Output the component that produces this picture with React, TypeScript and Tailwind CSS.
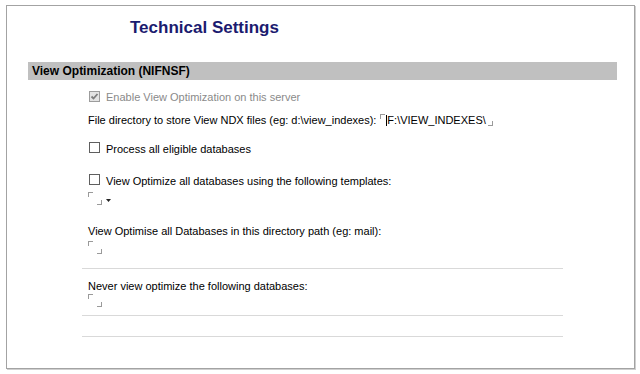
import type { ReactNode } from 'react';

// Lotus Notes field delimiters: top-left and bottom-right corner marks
const OpenMark = () => (
  <span className="inline-block w-[5px] h-[5px] border-l border-t border-[#9a9a9a] self-start mt-[1px]" />
);
const CloseMark = () => (
  <span className="inline-block w-[5px] h-[5px] border-r border-b border-[#9a9a9a] self-end mb-[1px]" />
);

const CheckBox = ({ checked, disabled }: { checked?: boolean; disabled?: boolean }) => (
  <span
    className={`inline-flex items-center justify-center w-[11px] h-[11px] border ${
      disabled ? 'border-[#9c9c9c] bg-[#e3e3e3]' : 'border-[#5f5f5f] bg-white'
    }`}
  >
    {checked && (
      <svg width="9" height="9" viewBox="0 0 9 9">
        <path d="M1.5 4.5 L3.5 6.5 L7.5 2" fill="none" stroke="#7d7d7d" strokeWidth="1.8" />
      </svg>
    )}
  </span>
);

const Row = ({ className, children }: { className: string; children: ReactNode }) => (
  <div className={`flex items-center h-[14px] ml-[81px] ${className}`}>{children}</div>
);

const EmptyField = ({ className, dropdown }: { className: string; dropdown?: boolean }) => (
  <div className={`flex h-[15px] ml-[81px] ${className}`}>
    <OpenMark />
    <span className="w-[4px]" />
    <CloseMark />
    {dropdown && (
      <svg width="5" height="3" viewBox="0 0 5 3" className="self-end mb-[4px] ml-[4px]">
        <path d="M0 0 H5 L2.5 3 Z" fill="#222" />
      </svg>
    )}
  </div>
);

export default function App() {
  return (
    <div className="w-[640px] h-[374px] bg-white pt-[5px] pl-[6px]" style={{ fontFamily: '"Liberation Sans", Arial, sans-serif' }}>
      <div className="w-[629px] h-[364px] border border-[#a3a3a3] shadow-[1px_1px_0_#cfcfcf] flex flex-col">
        <h1 className="mt-[12px] pl-[123px] text-[17px] leading-[20px] font-bold text-[#1b1b6f]">Technical Settings</h1>

        <div className="mt-[24px] ml-[21px] w-[589px] h-[18px] bg-[#c0c0c0] flex items-center pl-[4px]">
          <span className="text-[12px] font-bold text-black">View Optimization (NIFNSF)</span>
        </div>

        <div className="text-[11px] text-black">
          <Row className="mt-[10px]">
            <span className="ml-[1px]"><CheckBox checked disabled /></span>
            <span className="ml-[6px] text-[#8a8a8a]">Enable View Optimization on this server</span>
          </Row>

          <Row className="mt-[9px]">
            <span>File directory to store View NDX files (eg: d:\view_indexes):</span>
            <span className="flex h-[14px] ml-[4px]">
              <OpenMark />
              <span className="w-px h-[11px] bg-black self-center ml-[1px]" />
              <span className="leading-[14px]">F:\VIEW_INDEXES\</span>
              <span className="w-[2px]" />
              <CloseMark />
            </span>
          </Row>

          <Row className="mt-[15px]">
            <span className="ml-[1px]"><CheckBox /></span>
            <span className="ml-[6px]">Process all eligible databases</span>
          </Row>

          <Row className="mt-[18px]">
            <span className="ml-[1px]"><CheckBox /></span>
            <span className="ml-[6px]">View Optimize all databases using the following templates:</span>
          </Row>

          <EmptyField className="mt-[3px]" dropdown />

          <Row className="mt-[18px]">
            <span>View Optimise all Databases in this directory path (eg: mail):</span>
          </Row>

          <EmptyField className="mt-[2px]" />
        </div>

        <div className="mt-[13px] ml-[75px] w-[481px] h-px bg-[#d9d9d9]" />

        <div className="text-[11px] text-black">
          <Row className="mt-[10px]">
            <span>Never view optimize the following databases:</span>
          </Row>
          <EmptyField className="mt-[0px]" />
        </div>

        <div className="mt-[7px] ml-[75px] w-[481px] h-px bg-[#d9d9d9]" />
        <div className="mt-[20px] ml-[75px] w-[481px] h-px bg-[#d9d9d9]" />
      </div>
    </div>
  );
}
